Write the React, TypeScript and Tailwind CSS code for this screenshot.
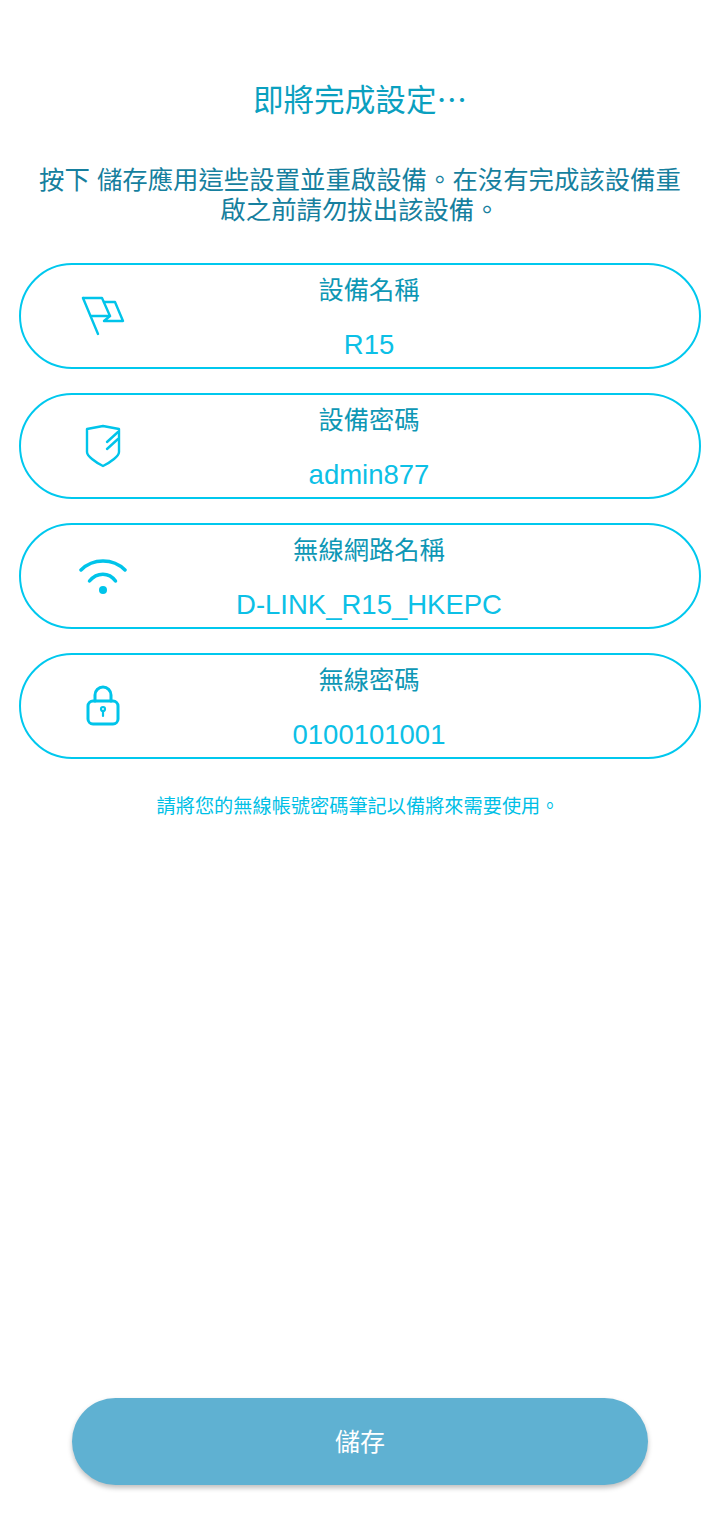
import React from 'react';

const cjk = "font-['Liberation_Sans','Noto_Sans_CJK_TC',sans-serif]";

function FlagIcon() {
  return (
    <svg width="44" height="40" viewBox="0 0 44 40" fill="none" stroke="#00c4ea" strokeWidth="2.4" strokeLinejoin="round" strokeLinecap="round">
      <path d="M2 2 L21 2 L29 20 L10 20" />
      <path d="M2 2 L17 38" />
      <path d="M23 6 L34 6 L42 25 L23 25 L29 20" />
    </svg>
  );
}

function ShieldIcon() {
  return (
    <svg width="36" height="44" viewBox="0 0 36 44" fill="none" stroke="#00c4ea" strokeWidth="2.4" strokeLinejoin="round" strokeLinecap="round">
      <path d="M2 5 L18 2 L34 5 V28 C34 32 26 38 18 42 C10 38 2 32 2 28 Z" />
      <path d="M22 18 L33 8" />
      <path d="M22 25 L33 15" />
    </svg>
  );
}

function WifiIcon() {
  return (
    <svg width="48" height="38" viewBox="0 0 48 38" fill="none" stroke="#00c4ea" strokeWidth="3.5" strokeLinecap="round">
      <path d="M2 13 C14 1 34 1 46 13" />
      <path d="M10.5 24 C18 15 30 15 36.5 24" />
      <circle cx="24" cy="33" r="4" fill="#00c4ea" stroke="none" />
    </svg>
  );
}

function LockIcon() {
  return (
    <svg width="36" height="42" viewBox="0 0 36 42" fill="none" stroke="#00c4ea" strokeWidth="3" strokeLinecap="round">
      <rect x="3" y="16" width="30" height="23" rx="5" />
      <path d="M10 16 V10 A8 8 0 0 1 26 10 V16" />
      <circle cx="18" cy="24" r="2" strokeWidth="2.2" />
      <path d="M18 26 V31" strokeWidth="2.2" />
    </svg>
  );
}

const rows = [
  { icon: <FlagIcon />, label: '設備名稱', value: 'R15' },
  { icon: <ShieldIcon />, label: '設備密碼', value: 'admin877' },
  { icon: <WifiIcon />, label: '無線網路名稱', value: 'D-LINK_R15_HKEPC' },
  { icon: <LockIcon />, label: '無線密碼', value: '0100101001' },
];

export default function App() {
  return (
    <div className={`flex flex-col items-center w-[720px] h-[1521px] bg-white ${cjk}`}>
      <h1 className="mt-[81px] text-[30.6px] leading-[38px] font-normal text-[#0aa0bf]">即將完成設定⋯</h1>
      <p className="mt-[46px] w-[650px] text-center text-[25.4px] leading-[30px] text-[#167f9e]">
        按下 儲存應用這些設置並重啟設備。在沒有完成該設備重啟之前請勿拔出該設備。
      </p>
      <div className="mt-[38px] w-[682px] flex flex-col gap-6">
        {rows.map((row) => (
          <div key={row.label} className="flex h-[106px] rounded-full border-2 border-[#00c8ee]">
            <div className="w-[164px] flex items-center justify-center shrink-0">{row.icon}</div>
            <div className="flex-1 pr-[146px] flex flex-col items-center">
              <div className="mt-[8px] text-[25.3px] leading-[34px] text-[#0e97b5] whitespace-nowrap">{row.label}</div>
              <div className="mt-[21px] text-[27.5px] leading-[34px] whitespace-nowrap text-[#0cc0e6]">{row.value}</div>
            </div>
          </div>
        ))}
      </div>
      <p className="mt-[35px] pr-1 text-[19.2px] leading-[26px] text-[#00bfe6]">請將您的無線帳號密碼筆記以備將來需要使用。</p>
      <button className="mt-auto mb-[36px] pt-0.5 w-[576px] h-[87px] rounded-full bg-[#5fb1d2] text-white text-[25px] shadow-[0_3px_5px_rgba(0,0,0,0.25)]">
        儲存
      </button>
    </div>
  );
}
